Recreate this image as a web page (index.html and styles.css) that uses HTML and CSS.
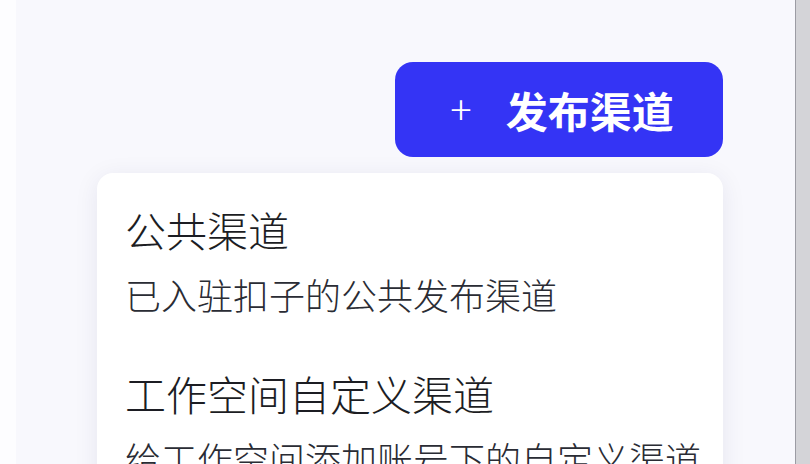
FILE: index.html
```html
<!DOCTYPE html>
<html lang="zh-CN">
<head>
<meta charset="UTF-8">
<meta name="viewport" content="width=device-width, initial-scale=1.0">
<title>发布渠道</title>
<link rel="stylesheet" href="styles.css">
</head>
<body>

<div class="page">
    <div class="gutter"></div>

    <div class="main">
        <div class="publish">
            <button class="publish-btn">
                <span class="plus">+</span>
                <span>发布渠道</span>
            </button>

            <div class="menu">
                <div class="menu-item">
                    <div class="menu-title">公共渠道</div>
                    <div class="menu-desc">已入驻扣子的公共发布渠道</div>
                </div>
                <div class="menu-item">
                    <div class="menu-title">工作空间自定义渠道</div>
                    <div class="menu-desc">给工作空间添加账号下的自定义渠道</div>
                </div>
            </div>
        </div>
    </div>

    <div class="scrollbar"></div>
</div>

</body>
</html>
```

FILE: styles.css
```css
body {
    margin: 0;
    font-family: "Noto Sans CJK SC", "Noto Sans", sans-serif;
    background: #f8f8fd;
    overflow: hidden;
}
.page {
    display: flex;
    height: 464px;
}
.gutter {
    width: 16px;
    background: #fdfdff;
}
.main {
    flex: 1;
    display: flex;
    justify-content: flex-end;
    padding: 62px 72px 0 0;
}
.publish {
    width: 626px;
    display: flex;
    flex-direction: column;
    align-items: flex-end;
}
.publish-btn {
    flex-shrink: 0;
    width: 328px;
    height: 95px;
    border: none;
    border-radius: 18px;
    background: #3434f5;
    color: #fff;
    font-family: inherit;
    font-size: 42px;
    font-weight: 700;
    display: flex;
    align-items: center;
    justify-content: center;
    gap: 34px;
    padding: 0 0 0 6px;
}
.plus {
    font-weight: 300;
    font-size: 40px;
    line-height: 1;
    margin-top: -4px;
}
.menu {
    flex-shrink: 0;
    margin-top: 16px;
    width: 100%;
    box-sizing: border-box;
    background: #fff;
    border-radius: 16px;
    box-shadow: 0 4px 24px rgba(30, 30, 80, 0.08);
    padding: 28px 28px;
}
.menu-item {
    margin-bottom: 46px;
}
.menu-title {
    font-size: 41px;
    font-weight: 300;
    line-height: 56px;
    color: #1c1d23;
    white-space: nowrap;
}
.menu-desc {
    margin-top: 12px;
    font-size: 36px;
    font-weight: 300;
    line-height: 50px;
    color: #2a2c34;
    white-space: nowrap;
}
.scrollbar {
    width: 14px;
    border-left: 1px solid #9c9ca4;
    background: #d4d4d8;
}
```
